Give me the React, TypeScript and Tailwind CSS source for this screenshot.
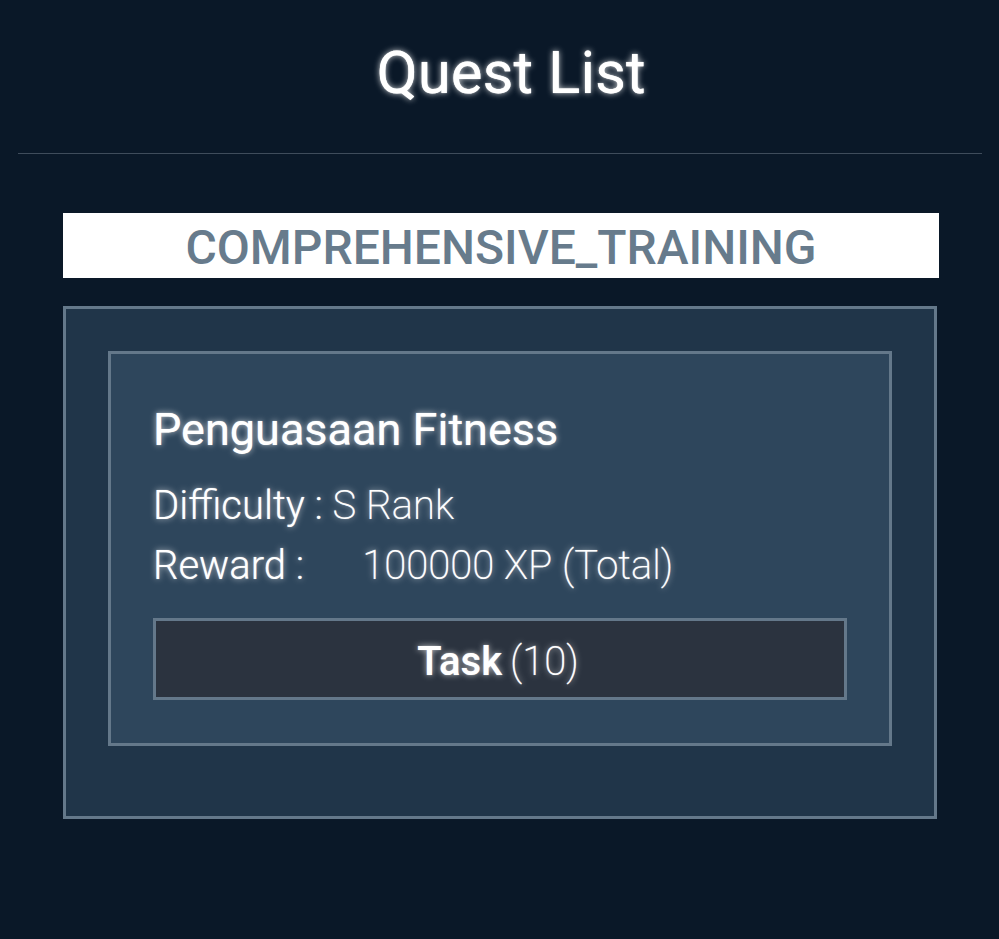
export default function App() {
  return (
    <main className="min-h-screen bg-[#0a1828] pr-[17px] pl-[18px] font-['Roboto',sans-serif] text-white">
      <header className="border-b border-[#3f4c5b] pt-[37px] pb-11 pl-[22px]">
        <h1 className="text-center text-[60px] leading-[72px] font-normal [text-shadow:0_0_1px_#fff,0_0_6px_rgba(255,255,255,0.8)]">Quest List</h1>
      </header>
      <section className="px-[45px] pt-[59px]">
        <h2 className="-mr-[2px] bg-white pt-1 text-center text-[48px] leading-[61px] font-medium text-[#677b8c]">COMPREHENSIVE_TRAINING</h2>
        <div className="mt-7 border-[3px] border-[#64788a] bg-[#203549] px-[42px] pt-[42px] pb-[70px]">
          <article className="border-[3px] border-[#64788a] bg-[#2e465c] px-[42px] pt-[46px] pb-[43px] text-[40px] leading-[60px] font-extralight [text-shadow:0_0_1px_rgba(255,255,255,0.7),0_0_6px_rgba(255,255,255,0.7)]">
            <h3 className="text-[45px] leading-[60px] font-normal">Penguasaan Fitness</h3>
            <p className="mt-4"><span className="font-light">Difficulty :</span> S Rank</p>
            <p><span className="mr-[58px] font-light">Reward :</span>100000 XP (Total)</p>
            <button type="button" className="mt-[22px] flex w-full justify-center gap-2 border-[3px] border-[#64788a] bg-[#2b333f] pt-[6px] pr-1 leading-[70px] font-extralight [text-shadow:inherit]">
              <span className="font-medium">Task</span>
              <span>(10)</span>
            </button>
          </article>
        </div>
      </section>
    </main>
  );
}
